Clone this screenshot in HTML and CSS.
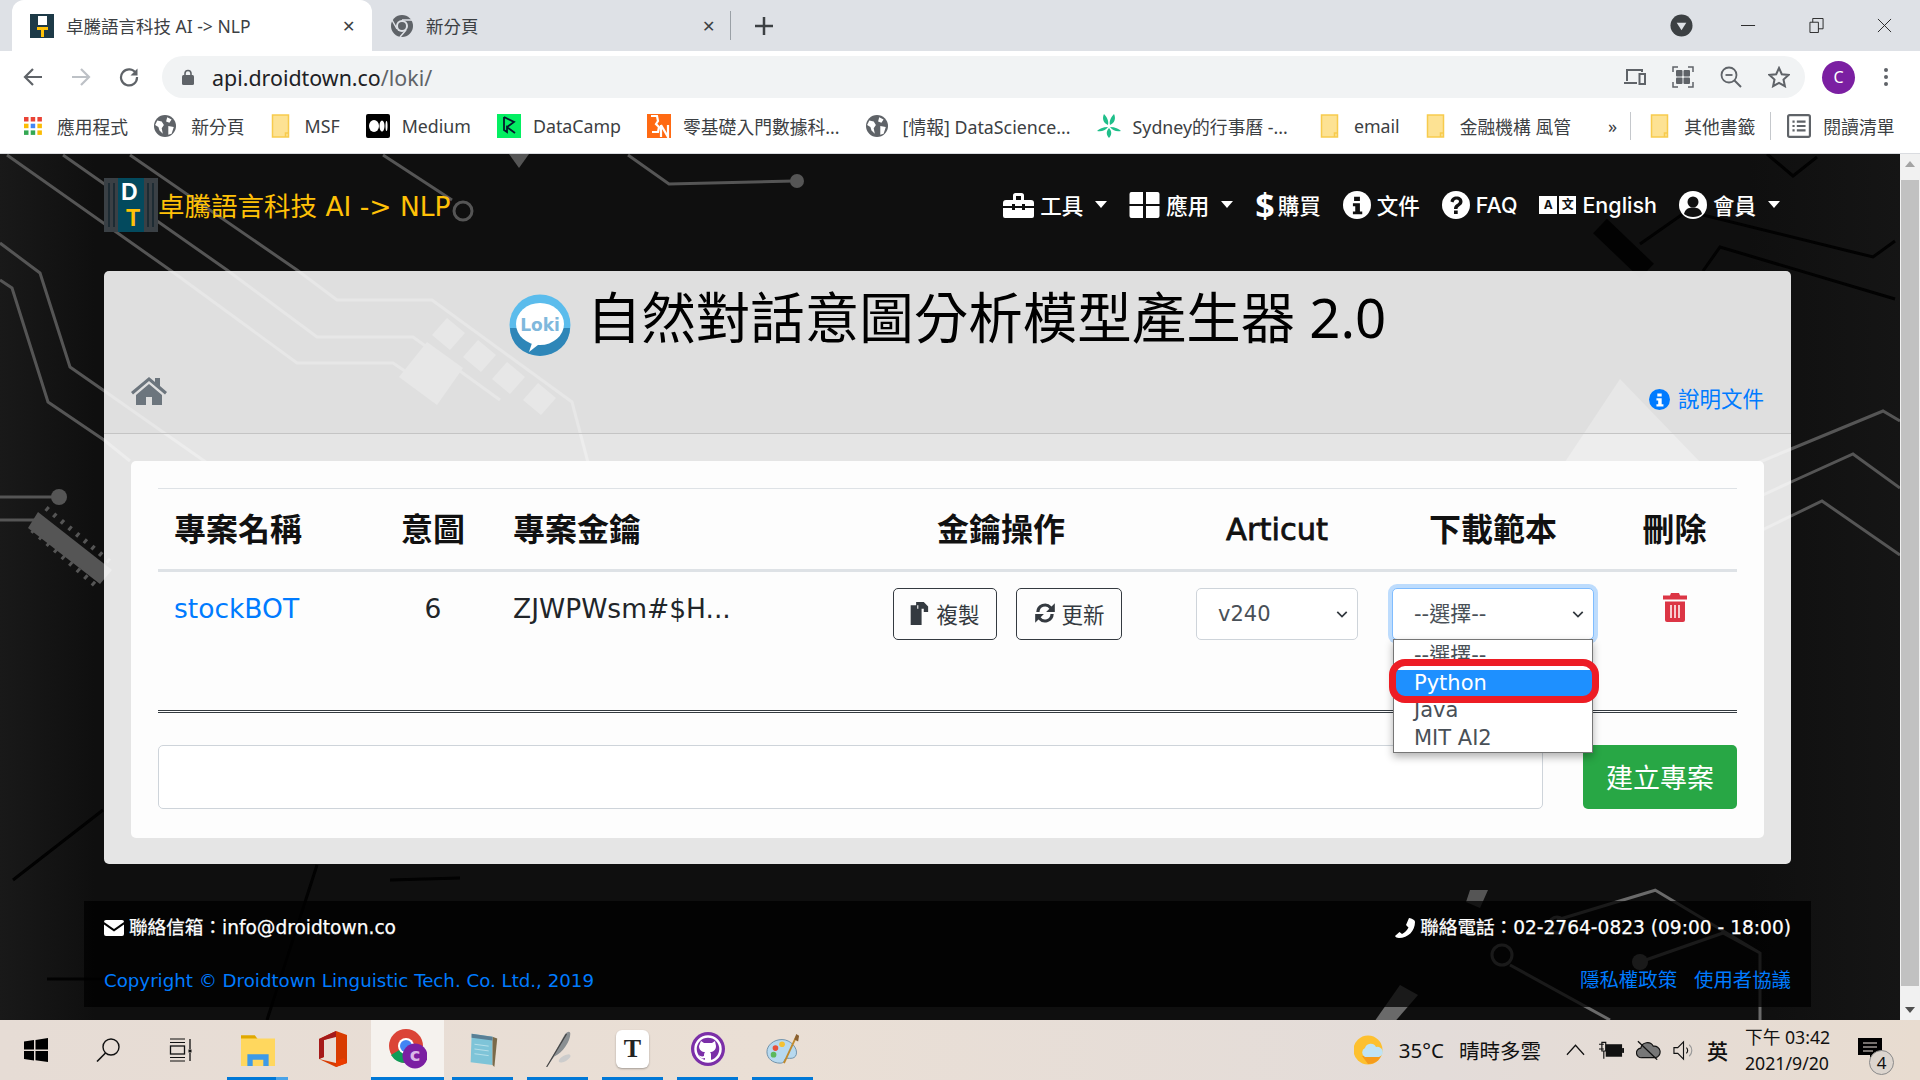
FILE: index.html
```html
<!DOCTYPE html>
<html lang="zh-Hant">
<head>
    <meta charset="UTF-8">
    <title>卓騰語言科技 AI -> NLP</title>
    <link rel="stylesheet" href="styles.css">
</head>
<body>

<svg class="defs" width="0" height="0">
    <symbol id="globe" viewBox="0 0 20 20"><circle cx="10" cy="10" r="10" fill="#5f6368"/><path d="M3 5l4 1 2 3-2 3 1 5-3-3-1-3-3-2zM12 2l4 2-2 3-3-1zM13 10l5 1-2 6-3 1z" fill="#fff"/></symbol>
    <symbol id="folder" viewBox="0 0 18 24"><path d="M1 1h16v22H1z" fill="#fde293" stroke="#f7cb4d" stroke-width="1.5"/><path d="M14 23v-4h3" fill="none" stroke="#f7cb4d" stroke-width="1.5"/></symbol>
    <symbol id="infoc" viewBox="0 0 24 24"><circle cx="12" cy="12" r="12" fill="currentColor"/><path d="M9.5 5h5v3.500h-5zM8.500 10.500h6v7h2v2.500h-8v-2.500h2v-4.500h-2z" fill="var(--cut, #111)"/></symbol>
</svg>

<header class="chrome">
    <div class="tabstrip">
        <div class="tab tab-active">
            <svg class="tab-ico" viewBox="0 0 24 24"><rect width="24" height="24" fill="#1d3a47"/><rect x="8" y="2" width="9" height="9" fill="#fff"/><path d="M7 13h11v3h-4v7h-3v-7H7z" fill="#ffc107"/></svg>
            <span class="tab-title">卓騰語言科技 AI -&gt; NLP</span>
            <span class="tab-x">✕</span>
        </div>
        <div class="tab">
            <svg class="tab-ico" viewBox="0 0 24 24"><circle cx="12" cy="12" r="11" fill="#5f6368"/><circle cx="12" cy="12" r="6" fill="#dee1e6"/><circle cx="12" cy="12" r="4" fill="#5f6368"/><path d="M12 6h10M7 15L2 6M16 16l-6 7" stroke="#dee1e6" stroke-width="1.500"/></svg>
            <span class="tab-title">新分頁</span>
            <span class="tab-x">✕</span>
        </div>
        <span class="tab-sep"></span>
        <svg class="tab-plus" viewBox="0 0 18 18"><path d="M9 0v18M0 9h18" stroke="#3c4043" stroke-width="2.500"/></svg>
        <svg class="tab-search" viewBox="0 0 24 24"><circle cx="12" cy="12" r="11.500" fill="#3c4043"/><path d="M7 9h10l-5 8z" fill="#dee1e6"/></svg>
        <div class="winctl">
            <svg viewBox="0 0 16 16"><path d="M0 8h15" stroke="#222" stroke-width="1"/></svg>
            <svg viewBox="0 0 16 16"><path d="M1 4.500h9v11H1zM4 4.500V.5h11v11h-5" fill="none" stroke="#222"/></svg>
            <svg viewBox="0 0 16 16"><path d="M1 1l14 14M15 1L1 15" stroke="#222" stroke-width="1"/></svg>
        </div>
    </div>

    <div class="toolbar">
        <svg class="nav-ico" viewBox="0 0 20 20"><path d="M19 10H3M10 2l-8 8 8 8" fill="none" stroke="#5f6368" stroke-width="2.200"/></svg>
        <svg class="nav-ico" viewBox="0 0 20 20"><path d="M1 10h16M10 2l8 8-8 8" fill="none" stroke="#bdc1c6" stroke-width="2.200"/></svg>
        <svg class="nav-ico" viewBox="0 0 20 20"><path d="M17 6.500A8 8 0 1 0 18 10" fill="none" stroke="#5f6368" stroke-width="2.200"/><path d="M18.500 1.500v7h-7z" fill="#5f6368"/></svg>
        <div class="omnibox">
            <svg class="lock" viewBox="0 0 12 16"><path d="M3 7V4.500a3 3 0 0 1 6 0V7" fill="none" stroke="#5f6368" stroke-width="1.600"/><rect y="6" width="12" height="10" rx="1.500" fill="#5f6368"/></svg>
            <span class="url">api.droidtown.co<span class="url-path">/loki/</span></span>
            <div class="omni-icons">
                <svg viewBox="0 0 22 20"><path d="M3 14V3h15v2M0 16h13" fill="none" stroke="#5f6368" stroke-width="2"/><rect x="15.500" y="7" width="5.500" height="10" fill="none" stroke="#5f6368" stroke-width="2"/></svg>
                <svg viewBox="0 0 22 22"><path d="M6 1H1v5M16 1h5v5M6 21H1v-5M16 21h5v-5" fill="none" stroke="#5f6368" stroke-width="1.500"/><rect x="4" y="4" width="6.500" height="6.500" rx="1" fill="#5f6368"/><rect x="11.500" y="4" width="6.500" height="6.500" rx="1" fill="#5f6368"/><rect x="4" y="11.500" width="6.500" height="6.500" rx="1" fill="#5f6368"/><rect x="11.500" y="11.500" width="6.500" height="6.500" rx="1" fill="#5f6368"/></svg>
                <svg viewBox="0 0 22 22"><circle cx="9" cy="9" r="7.500" fill="none" stroke="#5f6368" stroke-width="1.800"/><path d="M14.500 14.500L21 21" stroke="#5f6368" stroke-width="2"/><path d="M5.500 9h7" stroke="#5f6368" stroke-width="1.800"/></svg>
                <svg viewBox="0 0 22 22"><path d="M11 2l2.800 6.200 6.700.7-5 4.600 1.400 6.700L11 16.800 5.100 20.200l1.400-6.700-5-4.600 6.700-.7z" fill="none" stroke="#5f6368" stroke-width="2"/></svg>
            </div>
        </div>
        <span class="avatar">C</span>
        <svg class="kebab" viewBox="0 0 4 18"><circle cx="2" cy="2" r="2" fill="#5f6368"/><circle cx="2" cy="9" r="2" fill="#5f6368"/><circle cx="2" cy="16" r="2" fill="#5f6368"/></svg>
    </div>

    <div class="bookmarks">
        <a class="bm bm-wide"><svg class="bm-ico bm-apps" viewBox="0 0 18 18"><rect width="4.500" height="4.500" fill="#ea4335"/><rect x="6.700" width="4.500" height="4.500" fill="#ea4335"/><rect x="13.400" width="4.500" height="4.500" fill="#ea4335"/><rect y="6.700" width="4.500" height="4.500" fill="#fbbc04"/><rect x="6.700" y="6.700" width="4.500" height="4.500" fill="#4285f4"/><rect x="13.400" y="6.700" width="4.500" height="4.500" fill="#fbbc04"/><rect y="13.400" width="4.500" height="4.500" fill="#34a853"/><rect x="6.700" y="13.400" width="4.500" height="4.500" fill="#34a853"/><rect x="13.400" y="13.400" width="4.500" height="4.500" fill="#fbbc04"/></svg>應用程式</a>
        <a class="bm bm-wide"><svg class="bm-ico bm-globe"><use href="#globe"/></svg>新分頁</a>
        <a class="bm bm-wide"><svg class="bm-ico bm-folder"><use href="#folder"/></svg>MSF</a>
        <a class="bm"><svg class="bm-ico" viewBox="0 0 24 24"><rect width="24" height="24" rx="2" fill="#000"/><ellipse cx="8" cy="12" rx="5" ry="6" fill="#fff"/><ellipse cx="16" cy="12" rx="2.500" ry="5.500" fill="#fff"/><ellipse cx="20.500" cy="12" rx="1" ry="5" fill="#fff"/></svg>Medium</a>
        <a class="bm"><svg class="bm-ico" viewBox="0 0 24 24"><rect width="24" height="24" fill="#03ef62"/><path d="M7 3v13l3 2v-5l8 6M10 13l7-5-10-5" fill="none" stroke="#05192d" stroke-width="1.800"/></svg>DataCamp</a>
        <a class="bm"><svg class="bm-ico" viewBox="0 0 24 24"><rect width="24" height="24" fill="#ff6a13"/><path d="M4 2h6l1 5-2 3 3 3-1 5H5M14 11v12M14 11l7 12V11" fill="none" stroke="#fff" stroke-width="2.200"/></svg>零基礎入門數據科...</a>
        <a class="bm bm-wide"><svg class="bm-ico bm-globe"><use href="#globe"/></svg>[情報] DataScience...</a>
        <a class="bm"><svg class="bm-ico" viewBox="0 0 24 24"><path d="M11 11C6 9 5 4 7 0c3 3 5 7 4 11zM13 11c5-2 6-7 4-11-3 3-5 7-4 11zM11 13c-5 0-9 2-11 4 4 1 8 0 11-4zM13 13c5 0 9 2 11 4-4 1-8 0-11-4zM12 14c-3 3-3 7 0 10 3-3 3-7 0-10z" fill="#1fbf8a"/></svg>Sydney的行事曆 -...</a>
        <a class="bm bm-wide bm-email"><svg class="bm-ico bm-folder"><use href="#folder"/></svg>email</a>
        <a class="bm bm-wide bm-last"><svg class="bm-ico bm-folder"><use href="#folder"/></svg>金融機構 風管</a>
        <span class="bm-more">»</span>
        <span class="bm-sep"></span>
        <a class="bm bm-wide"><svg class="bm-ico bm-folder"><use href="#folder"/></svg>其他書籤</a>
        <span class="bm-sep bm-sep2"></span>
        <a class="bm"><svg class="bm-ico" viewBox="0 0 22 22"><rect x="1" y="1" width="20" height="20" rx="1.500" fill="none" stroke="#5f6368" stroke-width="2"/><path d="M5 7h2M9 7h8M5 11h2M9 11h8M5 15h2M9 15h8" stroke="#5f6368" stroke-width="2"/></svg>閱讀清單</a>
    </div>
</header>

<div class="viewport">
    <main class="page">
        <!-- circuit background, coordinates are the screen ones -->
        <svg class="circuit" viewBox="0 154 1900 866" fill="none">
            <g stroke="#555" stroke-width="3">
                <path d="M130 155L297 270 337 300 432 300 572 402 590 470"/>
                <path d="M63 155L227 270 317 337 413 337 500 400"/>
                <path d="M7 155L170 270 297 363 393 363 433 390"/>
                <path d="M383 155L452 200"/>
                <path d="M628 155L669 184 794 181"/>
                <path d="M0 243L40 273 70 367 103 390 210 465"/>
                <path d="M0 280L12 288 48 402 104 440 130 461"/>
                <path d="M0 497H52M0 520H37"/>
                <path d="M1700 487L1791 449 1883 411 1900 421"/>
                <path d="M1700 524L1791 482 1853 454 1900 488"/>
                <path d="M1700 560L1791 516 1822 501 1900 555"/>
                <path d="M1640 462L1665 480"/>
            </g>
            <g stroke="#6a6a6a" stroke-width="3">
                <path d="M1655 890L1760 953V1020M1640 962L1723 933 1760 953M1557 920L1656 890M1510 965L1610 1020"/>
            </g>
            <circle cx="463" cy="211" r="9" stroke="#555" stroke-width="3"/>
            <circle cx="1502" cy="955" r="10" stroke="#6a6a6a" stroke-width="3"/>
            <circle cx="1557" cy="925" r="8" stroke="#6a6a6a" stroke-width="3"/>
            <circle cx="797" cy="181" r="7" fill="#555"/>
            <circle cx="59" cy="497" r="8" fill="#555"/>
            <circle cx="1640" cy="962" r="8" fill="#6a6a6a"/>
            <path d="M509 154h20l-10 14z" fill="#555"/>
            <g fill="#555">
                <path d="M38 512L112 570 100 584 28 528z"/>
                <path d="M427 342L463 368 437 405 399 377zM447 318L465 333 450 350 432 335zM478 340L496 355 481 372 463 357zM507 362L525 377 510 394 492 379zM538 383L556 398 541 415 523 400z"/>
                <path d="M1620 379L1700 462H1565zM1470 890h18l-8 18-14-6z"/>
            </g>
            <path d="M1400 985l18 10-26 30h-20z" fill="#6a6a6a"/>
            <path d="M32 530L95 585M46 508L110 562" stroke="#555" stroke-width="5" stroke-dasharray="3 7"/>
            <g stroke="#020202" stroke-width="3">
                <path d="M1767 154L1793 176 1817 157"/>
                <path d="M1640 244L1687 211 1873 257 1895 241"/>
                <path d="M1703 271L1720 247 1895 299"/>
                <path d="M317 865L267 1020M390 880L460 878M13 880L103 810M47 979H103"/>
                <path d="M1600 226L1647 271" stroke-width="20"/>
            </g>
        </svg>

        <nav class="topnav">
            <a class="brand">
                <svg class="brand-logo" viewBox="0 0 54 54"><rect width="54" height="54" fill="#3a4045"/><rect x="14" width="26" height="54" fill="#034a5e"/><path d="M5 5v44M10 5v44M44 5v44M49 5v44" stroke="#1d2b33" stroke-width="2"/><text x="17" y="22" class="logo-d">D</text><text x="22" y="48" class="logo-t">T</text></svg>
                <span>卓騰語言科技 AI -&gt; NLP</span>
            </a>
            <ul class="menu">
                <li><svg class="mi" viewBox="0 0 31 26"><path d="M10 8V3.500A2.500 2.500 0 0 1 12.500 1h6A2.500 2.500 0 0 1 21 3.500V8h-3V4h-5v4z" fill="#fff"/><path d="M0 11a3 3 0 0 1 3-3h25a3 3 0 0 1 3 3v3H22v-2h-3v2h-7v-2H9v2H0zM0 16h9v2h3v-2h7v2h3v-2h9v8a2 2 0 0 1-2 2H2a2 2 0 0 1-2-2z" fill="#fff"/></svg>工具<i class="caret"></i></li>
                <li><svg class="mi" viewBox="0 0 30 26"><path d="M0 2a2 2 0 0 1 2-2h11.500v12H0zM16.500 0H28a2 2 0 0 1 2 2v10H16.500zM0 14h13.500v12H2a2 2 0 0 1-2-2zM16.500 14H30v10a2 2 0 0 1-2 2H16.500z" fill="#fff"/></svg>應用<i class="caret"></i></li>
                <li class="m-buy"><span class="dollar">$</span>購買</li>
                <li><svg class="mi mi-c" viewBox="0 0 24 24"><use href="#infoc"/></svg>文件</li>
                <li><svg class="mi mi-c" viewBox="0 0 28 28"><circle cx="14" cy="14" r="14" fill="#fff"/><path d="M8.500 10.500C9 7 11.500 5.500 14.500 5.500c3.500 0 6 2 6 5 0 4.500-5 4.500-5 7.500h-3.500c0-5 5-5 5-7.500 0-1.200-1-2-2.500-2-1.500 0-2.500 1-3 3zM12 19.500h3.700V23H12z" fill="#111"/></svg>FAQ</li>
                <li><span class="lang"><b>A</b><b>文</b></span>English</li>
                <li><svg class="mi mi-c" viewBox="0 0 28 28"><circle cx="14" cy="14" r="14" fill="#fff"/><circle cx="14" cy="11" r="5.500" fill="#111"/><path d="M5 23c1-4.500 4-6.500 9-6.500s8 2 9 6.500c-2.500 2-5.500 3-9 3s-6.500-1-9-3z" fill="#111"/></svg>會員<i class="caret"></i></li>
            </ul>
        </nav>

        <section class="card">
            <div class="card-head">
                <h1 class="title">
                    <svg class="loki" viewBox="0 0 62 62"><circle cx="31" cy="31" r="30.500" fill="#5bbcec"/><path d="M1 34a30 28 0 0 0 60 0z" fill="#2e86b8"/><ellipse cx="31" cy="30" rx="24" ry="21" fill="#fff"/><path d="M24 46l-4 12 14-11z" fill="#fff"/><text x="31" y="37" class="loki-text">Loki</text></svg>
                    自然對話意圖分析模型產生器 2.0
                </h1>
                <div class="head-tools">
                    <svg class="home" viewBox="0 0 36 28"><path d="M18 0L0 15l2 2.500L18 4l16 13.500 2-2.500-7-6V1h-5v4z" fill="#6c757d"/><path d="M18 7L5 18v10h10v-8h6v8h10V18z" fill="#6c757d"/></svg>
                    <a class="doc-link"><svg class="doc-ico" viewBox="0 0 24 24"><use href="#infoc"/></svg>說明文件</a>
                </div>
            </div>
            <div class="card-body">
                <div class="panel">
                    <table class="projects">
                        <colgroup>
                            <col class="c-name"><col class="c-intent"><col class="c-key"><col class="c-ops"><col class="c-art"><col class="c-dl"><col class="c-del">
                        </colgroup>
                        <thead>
                            <tr>
                                <th class="left">專案名稱</th>
                                <th>意圖</th>
                                <th class="left">專案金鑰</th>
                                <th>金鑰操作</th>
                                <th><span class="th-latin">Articut</span></th>
                                <th>下載範本</th>
                                <th>刪除</th>
                            </tr>
                        </thead>
                        <tbody>
                            <tr>
                                <td class="left"><a class="proj-link">stockBOT</a></td>
                                <td class="center">6</td>
                                <td class="left">ZJWPWsm#$H...</td>
                                <td class="center">
                                    <div class="ops">
                                        <button class="btn-line btn-copy"><svg viewBox="0 0 18 22"><path d="M0 4h6v3h4v15H0zM5 1h7l4 4v5h-4V7H7V4H5z" fill="#343a40"/></svg>複製</button>
                                        <button class="btn-line btn-update"><svg viewBox="0 0 22 22"><path d="M3 10a8 8 0 0 1 14-5l3-3v8h-8l3-3a5 5 0 0 0-9 3zM19 12a8 8 0 0 1-14 5l-3 3v-8h8l-3 3a5 5 0 0 0 9-3z" fill="#343a40"/></svg>更新</button>
                                    </div>
                                </td>
                                <td class="center"><select class="pick pick-art"><option>v240</option></select></td>
                                <td class="center dl-cell">
                                    <select class="pick pick-dl"><option>--選擇--</option></select>
                                    <ul class="dropdown">
                                        <li>--選擇--</li>
                                        <li class="hi">Python</li>
                                        <li>Java</li>
                                        <li>MIT AI2</li>
                                    </ul>
                                    <span class="redmark"></span>
                                </td>
                                <td class="center"><svg class="trash" viewBox="0 0 24 29"><path d="M8 0h8l1 2.500h7v4H0v-4h7z" fill="#dc3545"/><path d="M2 8.500h20V27a2 2 0 0 1-2 2H4a2 2 0 0 1-2-2z" fill="#dc3545"/><path d="M8 12v13M12 12v13M16 12v13" stroke="#fff" stroke-width="1.500"/></svg></td>
                            </tr>
                        </tbody>
                    </table>
                    <form class="newproj">
                        <input class="newproj-input" type="text">
                        <button class="btn-create" type="button">建立專案</button>
                    </form>
                </div>
            </div>
        </section>

        <footer class="sitefoot">
            <div class="foot-row foot-contact">
                <span class="foot-item"><svg viewBox="0 0 20 16"><path d="M0 2a2 2 0 0 1 2-2h16a2 2 0 0 1 2 2L10 9z" fill="#fff"/><path d="M0 4.500l10 7 10-7V14a2 2 0 0 1-2 2H2a2 2 0 0 1-2-2z" fill="#fff"/></svg>聯絡信箱：info@droidtown.co</span>
                <span class="foot-item"><svg class="foot-phone" viewBox="0 0 20 20"><path d="M20 4c0 9-7 16-16 16-2 0-3.500-1-4-2l4.500-4 2.500 2c3-1.500 5-3.500 6.500-6.500L11 7l3-7c3 .5 6 2 6 4z" fill="#fff"/></svg>聯絡電話：02-2764-0823 (09:00 - 18:00)</span>
            </div>
            <div class="foot-row foot-links">
                <a class="copyright">Copyright © Droidtown Linguistic Tech. Co. Ltd., 2019</a>
                <span class="policy"><a>隱私權政策</a><a>使用者協議</a></span>
            </div>
        </footer>
    </main>

    <div class="scrollbar">
        <svg class="sb-arrow" viewBox="0 0 20 20"><path d="M5 13l5-6 5 6z" fill="#a3a3a3"/></svg>
        <div class="sb-track"><div class="sb-thumb"></div></div>
        <svg class="sb-arrow" viewBox="0 0 20 20"><path d="M5 7l5 6 5-6z" fill="#505050"/></svg>
    </div>
</div>

<div class="taskbar">
    <div class="task-left">
        <svg class="t-start" viewBox="0 0 24 24"><path d="M0 3.500l10-1.400V11.500H0zM11.500 1.900L24 0v11.500H11.500zM0 13h10v9.400l-10-1.400zM11.500 13H24v11l-12.500-1.800z" fill="#000"/></svg>
        <svg class="t-search" viewBox="0 0 24 24"><circle cx="15" cy="9" r="8" fill="none" stroke="#111" stroke-width="1.400"/><path d="M9.500 15L1 23.500" stroke="#111" stroke-width="1.600"/></svg>
        <svg class="t-view" viewBox="0 0 25 24"><path d="M3 1h15M3 4.500h15M3 19.500h15M3 23h15" stroke="#111" stroke-width="1.200"/><rect x="3.500" y="8" width="14" height="8" fill="none" stroke="#111" stroke-width="1.300"/><path d="M23 1v10M23 15v8" stroke="#111" stroke-width="1.300"/><rect x="21.500" y="11.500" width="3" height="3" fill="#111"/></svg>
        <div class="tile tile-open tile-multi"><svg viewBox="0 0 32 32"><path d="M0 3h13l3 4H0z" fill="#e0a800"/><path d="M0 6h32v26H0z" fill="#ffd75e"/><path d="M6 32V21h20v11h-5v-6H11v6z" fill="#3d9ae8"/></svg></div>
        <div class="tile tile-plain"><svg viewBox="0 0 28 36"><path d="M0 8L17 0l11 4v28l-11 4L0 28l17 4V5L5 9v17l-5 2z" fill="#d83b01"/><path d="M0 8L17 0v6L5 9v17l-5 2z" fill="#a51a1a"/><path d="M17 30l8-3 3 5-11 4z" fill="#eb3c00"/></svg></div>
        <div class="tile tile-open tile-active"><svg viewBox="0 0 38 40"><circle cx="17" cy="17" r="17" fill="#db4437"/><path d="M17 17L2 26a17 17 0 0 0 15 8c3 0 6-1 9-3z" fill="#0f9d58"/><path d="M17 17h17a17 17 0 0 1-8 14z" fill="#ffcd40"/><circle cx="17" cy="17" r="8" fill="#fff"/><circle cx="17" cy="17" r="6" fill="#4285f4"/><circle cx="26" cy="27" r="12.500" fill="#7b1fa2"/><text x="26" y="32" class="t-c">c</text></svg></div>
        <div class="tile tile-open"><svg viewBox="0 0 32 38"><path d="M4 3l22 3v30L3 33z" fill="#7ec4d8"/><path d="M26 6l5 2-3 30-2-2z" fill="#7a6a4a"/><path d="M4 3l22 3v4L4 7z" fill="#5a7f95"/><path d="M7 14l15 2M7 19l15 2M7 24l15 2" stroke="#b9e0ea" stroke-width="1"/></svg></div>
        <div class="tile tile-open"><svg viewBox="0 0 30 38"><path d="M3 38L22 4c3-4 6-4 6-1 0 8-8 20-17 24z" fill="#8a8f92"/><path d="M3 38L24 3" stroke="#444" stroke-width="1.200"/><ellipse cx="22" cy="29" rx="7" ry="3" fill="#ccc" transform="rotate(-30 22 29)"/></svg></div>
        <div class="tile tile-open"><span class="t-tee">T</span></div>
        <div class="tile tile-open"><svg viewBox="0 0 34 34"><circle cx="17" cy="17" r="17" fill="#7b2fa8"/><circle cx="17" cy="17" r="12.500" fill="none" stroke="#fff" stroke-width="2.500"/><path d="M10 9l3 2h8l3-2 1 5c0 4-3 6-6 6 1 1 1 2 1 3v6h-6v-3c-3 1-5 0-6-3 1 1 3 2 5 1 0-1 0-3 1-4-3 0-6-2-6-6z" fill="#fff"/></svg></div>
        <div class="tile tile-open"><svg viewBox="0 0 36 36"><path d="M17 8C8 8 1 14 1 21s6 12 14 12c5 0 4-4 6-5s9 2 11-4c2-7-6-16-15-16z" fill="#b7d9ef" stroke="#6b8ea8"/><circle cx="10" cy="17" r="3" fill="#e8513a"/><circle cx="17" cy="13" r="3" fill="#f5c132"/><circle cx="8" cy="24" r="3" fill="#5cb85c"/><path d="M19 33L32 5" stroke="#c08a2e" stroke-width="2"/><path d="M30 8l2-6 3 2-1 6z" fill="#8a6030"/></svg></div>
    </div>
    <div class="tray">
        <svg class="tr-weather" viewBox="0 0 30 32"><circle cx="14" cy="16" r="14.500" fill="#fdc02f"/><path d="M14 30a14 14 0 0 0 13-8H8z" fill="#f59b1c"/><path d="M11 23a5 5 0 0 1 0-9 6 6 0 0 1 11-1 5 5 0 0 1 3 10z" fill="#bfe3f5"/></svg>
        <span class="tr-temp">35°C</span>
        <span class="tr-cond">晴時多雲</span>
        <svg class="tr-up" viewBox="0 0 20 12"><path d="M1 11L10 1l9 10" fill="none" stroke="#111" stroke-width="1.300"/></svg>
        <svg class="tr-batt" viewBox="0 0 26 20"><path d="M0 4h5M0 9h5M3 2h4v9H3zM5 11v8" fill="none" stroke="#111" stroke-width="1.200"/><rect x="7" y="4" width="17" height="13" fill="#111"/><rect x="24" y="8" width="2" height="5" fill="#111"/></svg>
        <svg class="tr-cloud" viewBox="0 0 26 20"><path d="M6 18a5 5 0 0 1-1-10 7 7 0 0 1 13-2 6 6 0 0 1 2 12z" fill="#777" stroke="#111" stroke-width="1.200"/><path d="M2 1l20 19" stroke="#111" stroke-width="1.400"/></svg>
        <svg class="tr-vol" viewBox="0 0 22 22"><path d="M1 8h4l6-6v18l-6-6H1z" fill="none" stroke="#111" stroke-width="1.200"/><path d="M14 8a4 4 0 0 1 0 6" fill="none" stroke="#111" stroke-width="1.200"/><path d="M17 5a8 8 0 0 1 0 12" fill="none" stroke="#999" stroke-width="1.200"/></svg>
        <span class="tr-ime">英</span>
        <div class="tr-clock"><span>下午 03:42</span><span>2021/9/20</span></div>
        <div class="tr-notify">
            <svg viewBox="0 0 24 24"><path d="M0 0h24v17h-8l-4 5v-5H0z" fill="#000"/><path d="M5 5h14M5 9h14M5 13h10" stroke="#e9e0d9" stroke-width="1.200"/></svg>
            <span class="tr-badge">4</span>
        </div>
    </div>
</div>

</body>
</html>
```

FILE: styles.css
```css
* {
    box-sizing: border-box;
}

html, body {
    margin: 0;
    height: 100%;
    overflow: hidden;
}

body {
    width: 1920px;
    height: 1080px;
    display: flex;
    flex-direction: column;
    font-family: "Noto Sans", "Noto Sans CJK TC", sans-serif;
}

.defs {
    position: absolute;
}

/* browser chrome */
.chrome {
    flex: none;
    height: 154px;
    background: #fff;
    border-bottom: 1px solid #dadce0;
    color: #3c4043;
}

.tabstrip {
    height: 51px;
    background: #dee1e6;
    display: flex;
    align-items: center;
    padding-left: 12px;
}

.tab {
    width: 360px;
    height: 51px;
    display: flex;
    align-items: center;
    padding: 0 17px 0 18px;
    font-size: 17.5px;
}

.tab-active {
    background: #fff;
    border-radius: 12px 12px 0 0;
}

.tab-ico {
    width: 24px;
    height: 24px;
    margin-right: 12px;
}

.tab-title {
    flex: 1;
    white-space: nowrap;
}

.tab-x {
    font-size: 16px;
    color: #3c4043;
}

.tab-sep {
    width: 1px;
    height: 29px;
    background: #9aa0a6;
    margin-left: -2px;
}

.tab-plus {
    width: 18px;
    height: 18px;
    margin-left: 24px;
}

.tab-search {
    width: 23px;
    height: 23px;
    margin-left: 897px;
}

.winctl {
    display: flex;
    margin-left: 48px;
    gap: 53px;
}

.winctl svg {
    width: 15px;
    height: 15px;
}

.toolbar {
    height: 52px;
    display: flex;
    align-items: center;
    padding-left: 23px;
}

.nav-ico {
    width: 20px;
    height: 20px;
    margin-right: 28px;
}

.omnibox {
    width: 1643px;
    height: 42px;
    margin-left: -5px;
    background: #f1f3f4;
    border-radius: 21px;
    display: flex;
    align-items: center;
    padding: 0 15px 0 20px;
}

.lock {
    width: 12px;
    height: 16px;
    margin-right: 18px;
}

.url {
    padding-top: 1px;
    font-size: 21.4px;
    color: #202124;
}

.url-path {
    color: #5f6368;
}

.omni-icons {
    margin-left: auto;
    display: flex;
    align-items: center;
    gap: 26px;
}

.omni-icons svg {
    width: 22px;
    height: 22px;
}

.avatar {
    width: 33px;
    height: 33px;
    margin-left: 17px;
    border-radius: 50%;
    background: #7b1fa2;
    color: #fff;
    font-size: 16px;
    display: flex;
    align-items: center;
    justify-content: center;
}

.kebab {
    width: 4px;
    height: 18px;
    margin-left: 29px;
}

.bookmarks {
    height: 50px;
    display: flex;
    align-items: center;
    padding: 0 0 5px 24px;
    font-size: 17.8px;
    gap: 26px;
    white-space: nowrap;
}

.bm {
    display: flex;
    align-items: center;
    gap: 12px;
}

.bm-wide {
    gap: 15px;
}

.bm-ico {
    width: 24px;
    height: 24px;
}

.bm-apps {
    width: 18px;
    height: 18px;
}

.bm-globe {
    width: 22px;
    height: 22px;
}

.bm-folder {
    width: 19px;
    height: 24px;
}

.bm-email {
    margin-left: 6px;
}

.bm-last {
    margin-right: 11px;
}

.bm-more {
    font-size: 18px;
}

.bm-sep {
    width: 1px;
    height: 28px;
    background: #c5c8cc;
    margin: 0 -7px 0 -13px;
}

.bm-sep2 {
    margin: 0 -10px 0 -11px;
}

/* page */
.viewport {
    flex: none;
    height: 866px;
    display: flex;
}

.page {
    position: relative;
    flex: none;
    width: 1900px;
    height: 866px;
    overflow: hidden;
    background: linear-gradient(90deg, #191919, #0f0f0f 5%, #0f0f0f 92%, #151515);
    padding: 0 89px 0 84px;
}

.circuit {
    position: absolute;
    left: 0;
    top: 0;
    width: 1900px;
    height: 866px;
}

.topnav, .card, .sitefoot {
    position: relative;
}

.topnav {
    height: 117px;
    padding: 0 20px 16px;
    display: flex;
    align-items: center;
    justify-content: space-between;
    color: #fff;
}

.brand {
    display: flex;
    align-items: center;
    font-family: "DejaVu Sans", "Noto Sans CJK TC", sans-serif;
    font-size: 26.5px;
    color: #ffc107;
}

.brand-logo {
    width: 54px;
    height: 54px;
}

.logo-d {
    font: bold 23px "Liberation Sans", sans-serif;
    fill: #fff;
}

.logo-t {
    font: bold 23px "Liberation Sans", sans-serif;
    fill: #ffc107;
}

.menu {
    list-style: none;
    margin: 0 11px 0 0;
    padding: 0;
    display: flex;
    align-items: center;
    gap: 22px;
    font-family: Inter, "Noto Sans CJK TC", sans-serif;
    font-size: 21.5px;
    font-weight: 500;
}

.menu li {
    display: flex;
    align-items: center;
    gap: 6px;
}

.menu .m-buy {
    gap: 3px;
}

.mi {
    width: 31px;
    height: 26px;
}

.mi-c {
    width: 28px;
    height: 28px;
    color: #fff;
}

.caret {
    width: 0;
    height: 0;
    margin-left: 6px;
    border: 6.500px solid transparent;
    border-top: 7px solid #fff;
    border-bottom: 0;
}

.dollar {
    font: bold 34px "Noto Sans", sans-serif;
    line-height: 1;
}

.lang {
    display: flex;
    width: 37px;
    height: 18px;
    color: #111;
    font-size: 12px;
    line-height: 18px;
    gap: 2px;
}

.lang b {
    flex: 1;
    background: #fff;
    text-align: center;
}

.card {
    width: 1687px;
    margin-left: 20px;
    border-radius: 5px;
    overflow: hidden;
    background: rgba(255, 255, 255, .895);
}

.card-head {
    height: 163px;
    background: rgba(0, 0, 0, .025);
    border-bottom: 1px solid #c4c4c4;
    display: flex;
    flex-direction: column;
    padding: 0 27px;
}

.title {
    margin: 15px 0 0;
    display: flex;
    align-items: center;
    justify-content: center;
    gap: 16px;
    font-size: 54.5px;
    font-weight: 400;
    line-height: 62px;
    color: #000;
    white-space: nowrap;
}

.loki {
    width: 62px;
    height: 62px;
    transform: translateY(8px);
}

.loki-text {
    font: bold 17px "DejaVu Sans", sans-serif;
    fill: #7fb8dc;
    text-anchor: middle;
}

.head-tools {
    display: flex;
    justify-content: space-between;
    align-items: flex-start;
    margin-top: 29px;
}

.home {
    width: 36px;
    height: 28px;
}

.doc-link {
    display: flex;
    align-items: center;
    gap: 8px;
    margin-top: 9px;
    font-size: 21.5px;
    line-height: 26px;
    color: #007bff;
}

.doc-ico {
    width: 21px;
    height: 21px;
    color: #007bff;
    --cut: #fff;
}

.card-body {
    padding: 27px 27px 26px;
}

.panel {
    background: #fdfdfd;
    border-radius: 5px;
    padding: 27px 27px 29px;
}

.projects {
    width: 1579px;
    table-layout: fixed;
    border-collapse: collapse;
    font-family: "DejaVu Sans", "Noto Sans CJK TC", sans-serif;
    color: #212529;
}

.c-name { width: 211px; }
.c-intent { width: 128px; }
.c-key { width: 325px; }
.c-ops { width: 358px; }
.c-art { width: 194px; }
.c-dl { width: 238px; }
.c-del { width: 125px; }

.projects th {
    height: 82px;
    padding: 0 16px 5px;
    border-top: 1px solid #dee2e6;
    border-bottom: 3px solid #dee2e6;
    font-size: 32px;
    font-weight: 700;
    text-align: center;
    color: #111;
}

.th-latin {
    display: inline-block;
    font-size: 30.5px;
    font-weight: 400;
    -webkit-text-stroke: .8px #111;
    transform: translateY(2px);
}

.projects td {
    height: 141px;
    padding: 16px 16px 0;
    border-bottom: 3px double #343a40;
    font-size: 26.5px;
    line-height: 42px;
    vertical-align: top;
    white-space: nowrap;
}

.projects .left {
    text-align: left;
}

.projects .center {
    text-align: center;
}

.proj-link {
    color: #007bff;
}

.ops {
    display: flex;
    justify-content: center;
    gap: 19px;
    padding-left: 13px;
}

.btn-line {
    height: 52px;
    display: flex;
    align-items: center;
    gap: 5px;
    padding: 0 16px 2px;
    background: transparent;
    border: 1px solid #343a40;
    border-radius: 5px;
    font: 21.5px "Noto Sans", "Noto Sans CJK TC", sans-serif;
    color: #343a40;
}

.btn-line svg {
    width: 21px;
    height: 24px;
}

.btn-update svg {
    width: 24px;
}

.pick {
    height: 52px;
    padding: 0 21px;
    appearance: none;
    background: #fff url("data:image/svg+xml,%3Csvg xmlns='http://www.w3.org/2000/svg' viewBox='0 0 14 8'%3E%3Cpath d='M1.500 1l5.500 5.500L12.500 1' fill='none' stroke='%23343a40' stroke-width='2'/%3E%3C/svg%3E") no-repeat right 9px center / 12px 7px;
    border: 1px solid #ced4da;
    border-radius: 5px;
    font: 21px "DejaVu Sans", "Noto Sans CJK TC", sans-serif;
    color: #495057;
    vertical-align: top;
}

.pick-art {
    width: 162px;
}

.pick-dl {
    width: 202px;
    border-color: #80bdff;
    box-shadow: 0 0 0 4px rgba(0, 123, 255, .25);
}

.dl-cell {
    position: relative;
}

.dropdown {
    position: absolute;
    left: 19px;
    top: 67px;
    width: 200px;
    margin: 0;
    padding: 2px 0 0;
    list-style: none;
    background: #fff;
    border: 1px solid #767676;
    box-shadow: 0 4px 8px rgba(0, 0, 0, .3);
    font-size: 21px;
    line-height: 27.500px;
    text-align: left;
    color: #495057;
}

.dropdown li {
    padding-left: 20px;
}

.dropdown .hi {
    background: #1e90ff;
    color: #fff;
}

.redmark {
    position: absolute;
    left: 15px;
    top: 87px;
    width: 210px;
    height: 44px;
    border: 7px solid #ed1c24;
    border-radius: 16px;
}

.trash {
    width: 24px;
    height: 29px;
    margin-top: 5px;
}

.newproj {
    margin-top: 32px;
    display: flex;
    gap: 40px;
}

.newproj-input {
    flex: 1;
    height: 64px;
    background: #fff;
    border: 1px solid #ced4da;
    border-radius: 5px;
}

.btn-create {
    width: 154px;
    height: 64px;
    padding-bottom: 2px;
    background: #28a745;
    border: 0;
    border-radius: 5px;
    color: #fff;
    font: 27px "Noto Sans", "Noto Sans CJK TC", sans-serif;
}

.sitefoot {
    margin-top: 37px;
    height: 106px;
    background: rgba(0, 0, 0, .75);
    padding: 13px 20px 0;
    font-family: "DejaVu Sans", "Noto Sans CJK TC", sans-serif;
    font-size: 18.600px;
    color: #fff;
}

.foot-row {
    display: flex;
    justify-content: space-between;
    line-height: 28px;
}

.foot-contact {
    -webkit-text-stroke: .25px #fff;
}

.foot-item {
    display: flex;
    align-items: center;
    gap: 5px;
}

.foot-item svg {
    width: 20px;
    height: 16px;
}

.foot-item .foot-phone {
    height: 20px;
}

.foot-links {
    margin-top: 25px;
    color: #007bff;
}

.copyright {
    font-size: 18.200px;
}

.policy {
    display: flex;
    gap: 17px;
    font-size: 19.400px;
}

.scrollbar {
    flex: none;
    width: 20px;
    background: #f1f1f1;
    display: flex;
    flex-direction: column;
}

.sb-arrow {
    flex: none;
    width: 20px;
    height: 20px;
}

.sb-track {
    flex: 1;
    padding-top: 6px;
}

.sb-thumb {
    width: 18px;
    height: 806px;
    margin-left: 1px;
    background: #c1c1c1;
}

/* windows taskbar */
.taskbar {
    flex: none;
    height: 60px;
    display: flex;
    justify-content: space-between;
    background: linear-gradient(90deg, #e6dcd5, #eadfd5 40%, #e3dcd9 75%, #e8dcd0);
    color: #111;
}

.task-left {
    display: flex;
    align-items: center;
    padding-left: 24px;
}

.t-start {
    width: 24px;
    height: 24px;
}

.t-search {
    width: 24px;
    height: 24px;
    margin-left: 48px;
}

.t-view {
    width: 25px;
    height: 24px;
    margin: 0 35px 0 47px;
}

.tile {
    width: 61px;
    height: 60px;
    margin-right: 14px;
    display: flex;
    align-items: center;
    justify-content: center;
    border-bottom: 3px solid transparent;
}

.tile svg {
    width: 34px;
    height: 36px;
}

.tile-open {
    border-bottom-color: #0078d7;
}

.tile-multi {
    margin-right: 8px;
    border-image: linear-gradient(90deg, #0078d7 80%, #4aa3e8 80%) 1;
}

.tile-plain {
    margin: 0 8px 0 6px;
}

.tile-active {
    width: 73px;
    margin-right: 8px;
    background: #f5f2ee;
}

.tile-active svg {
    width: 38px;
    height: 40px;
}

.t-c {
    font: bold 18px "DejaVu Sans", sans-serif;
    fill: #d9b8e8;
    text-anchor: middle;
}

.t-tee {
    width: 33px;
    height: 38px;
    background: #fff;
    border-radius: 6px;
    box-shadow: 0 1px 2px rgba(0, 0, 0, .3);
    text-align: center;
    font: bold 26px/38px "Liberation Serif", serif;
    color: #222;
}

.tray {
    display: flex;
    align-items: center;
    padding-right: 38px;
    font-size: 20.500px;
    position: relative;
}

.tr-weather {
    width: 30px;
    height: 32px;
    margin-right: 15px;
}

.tr-temp {
    margin-right: 15px;
}

.tr-cond {
    margin-right: 25px;
}

.tr-up {
    width: 19px;
    height: 12px;
    margin-right: 14px;
}

.tr-batt {
    width: 25px;
    height: 20px;
    margin-right: 12px;
}

.tr-cloud {
    width: 25px;
    height: 20px;
    margin-right: 12px;
}

.tr-vol {
    width: 21px;
    height: 21px;
    margin-right: 13px;
}

.tr-ime {
    font-size: 21px;
    font-weight: 500;
    margin-right: 17px;
}

.tr-clock {
    width: 113px;
    display: flex;
    flex-direction: column;
    font-size: 17.700px;
    line-height: 26px;
}

.tr-notify {
    position: relative;
    width: 24px;
    height: 24px;
}

.tr-notify svg {
    width: 24px;
    height: 24px;
    display: block;
}

.tr-badge {
    position: absolute;
    left: 11px;
    top: 12px;
    width: 25px;
    height: 25px;
    border: 1px solid #8a8a8a;
    border-radius: 50%;
    background: #dcd5ce;
    text-align: center;
    font-size: 17px;
    line-height: 23px;
}
```
